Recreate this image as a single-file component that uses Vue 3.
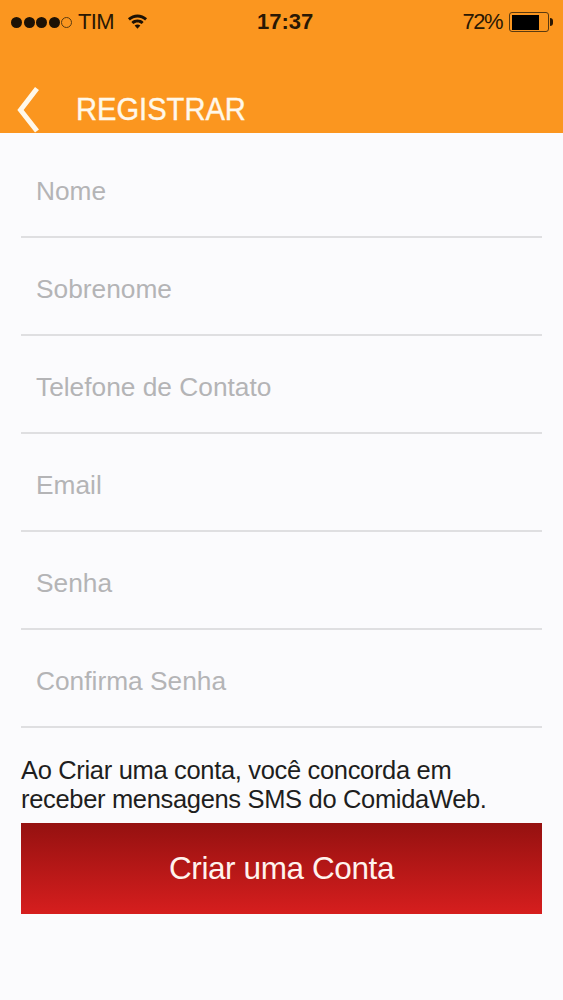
<template>
  <div class="tela">
    <header class="topo">
      <div class="status">
        <div class="status-esq">
          <span class="sinal">
            <i v-for="n in 4" :key="n" class="ponto"></i>
            <i class="ponto vazio"></i>
          </span>
          <span class="operadora">TIM</span>
          <svg class="wifi" width="21" height="18" viewBox="0 0 22 18">
            <path d="M1 6.2C6.6 .8 15.4 .8 21 6.2L19 8.4C14.4 4.2 7.6 4.2 3 8.4Z" fill="#1d1205" />
            <path d="M4.6 10C8.2 6.6 13.8 6.6 17.4 10L15.4 12.2C13 10 9 10 6.6 12.2Z" fill="#1d1205" />
            <path d="M8 13.6C9.8 12.2 12.2 12.2 14 13.6L11 17Z" fill="#1d1205" />
          </svg>
        </div>
        <span class="hora">17:37</span>
        <div class="status-dir">
          <span class="porcento">72%</span>
          <span class="bateria"><i class="carga"></i></span>
          <i class="polo"></i>
        </div>
      </div>
      <div class="barra">
        <button class="voltar" aria-label="Voltar">
          <svg width="28" height="48" viewBox="0 0 28 48">
            <path d="M24 3.5L7.5 25L24 46" fill="none" stroke="#fff8ea" stroke-width="5" />
          </svg>
        </button>
        <h1 class="titulo">REGISTRAR</h1>
      </div>
    </header>

    <form class="formulario" @submit.prevent>
      <div v-for="campo in campos" :key="campo" class="campo">
        <input type="text" :placeholder="campo" />
      </div>
      <p class="aviso">
        Ao Criar uma conta, você concorda em<br />
        receber mensagens SMS do ComidaWeb.
      </p>
      <button class="criar" type="submit">Criar uma Conta</button>
    </form>
  </div>
</template>

<script setup>
const campos = [
  "Nome",
  "Sobrenome",
  "Telefone de Contato",
  "Email",
  "Senha",
  "Confirma Senha",
];
</script>

<style>
body {
  background: #fbfbfd;
}
</style>

<style scoped>
.tela {
  width: 563px;
  height: 1000px;
  background: #fbfbfd;
  font-family: "Liberation Sans", Arial, sans-serif;
  overflow: hidden;
}

.topo {
  height: 133px;
  background: #fb961f;
  display: flex;
  flex-direction: column;
}

/* STATUS BAR */
.status {
  height: 44px;
  padding: 0 10px 0 11px;
  display: flex;
  align-items: center;
  justify-content: space-between;
  color: #2a1804;
  position: relative;
}

.status-esq,
.status-dir {
  display: flex;
  align-items: center;
}

.sinal {
  display: flex;
  gap: 1.5px;
  margin-right: 6px;
}

.ponto {
  width: 11px;
  height: 11px;
  border-radius: 50%;
  background: #1d1205;
}

.ponto.vazio {
  background: none;
  border: 1px solid #5a3a10;
  box-sizing: border-box;
}

.operadora {
  font-size: 22px;
  letter-spacing: -0.7px;
  margin-right: 13px;
}

.wifi {
  margin-top: -3px;
}

.hora {
  position: absolute;
  left: 257px;
  font-size: 22px;
  font-weight: 700;
}

.porcento {
  font-size: 22px;
  letter-spacing: -1.5px;
  margin-right: 7px;
}

.bateria {
  width: 40px;
  height: 20px;
  box-sizing: border-box;
  border: 1.5px solid #5a3a10;
  border-radius: 3px;
  padding: 1.5px;
  display: flex;
}

.carga {
  width: 27px;
  background: #000;
}

.polo {
  width: 3px;
  height: 8px;
  background: #2a1804;
  border-radius: 0 3px 3px 0;
  margin-left: 1px;
}

/* BARRA DE TITULO */
.barra {
  flex: 1;
  display: flex;
  align-items: flex-end;
  padding-left: 13px;
}

.voltar {
  width: 28px;
  height: 48px;
  padding: 0;
  border: none;
  background: none;
}

.titulo {
  margin: 0 0 6px 35px;
  color: #fff8ea;
  font-size: 32px;
  font-weight: 400;
  line-height: 36px;
  -webkit-text-stroke: 0.4px #fff8ea;
  transform: scaleX(0.91);
  transform-origin: left;
}

/* FORMULARIO */
.formulario {
  padding: 7px 21px 0;
  display: flex;
  flex-direction: column;
}

.campo {
  height: 96px;
  border-bottom: 2px solid #dfdfe1;
  display: flex;
  align-items: center;
}

.campo input {
  width: 100%;
  height: 100%;
  padding: 7px 15px 0;
  border: none;
  outline: none;
  background: none;
  font-family: inherit;
  font-size: 26.3px;
}

.campo input::placeholder {
  color: #b4b4b6;
  opacity: 1;
}

.aviso {
  margin: 28px 0 0;
  color: #1e1e20;
  font-size: 25.5px;
  letter-spacing: -0.33px;
  line-height: 29px;
}

.criar {
  margin-top: 9px;
  height: 91px;
  border: none;
  background: linear-gradient(#951110, #d61e1e);
  color: #fff3ee;
  font-family: inherit;
  font-size: 31.5px;
  letter-spacing: -0.4px;
}
</style>
